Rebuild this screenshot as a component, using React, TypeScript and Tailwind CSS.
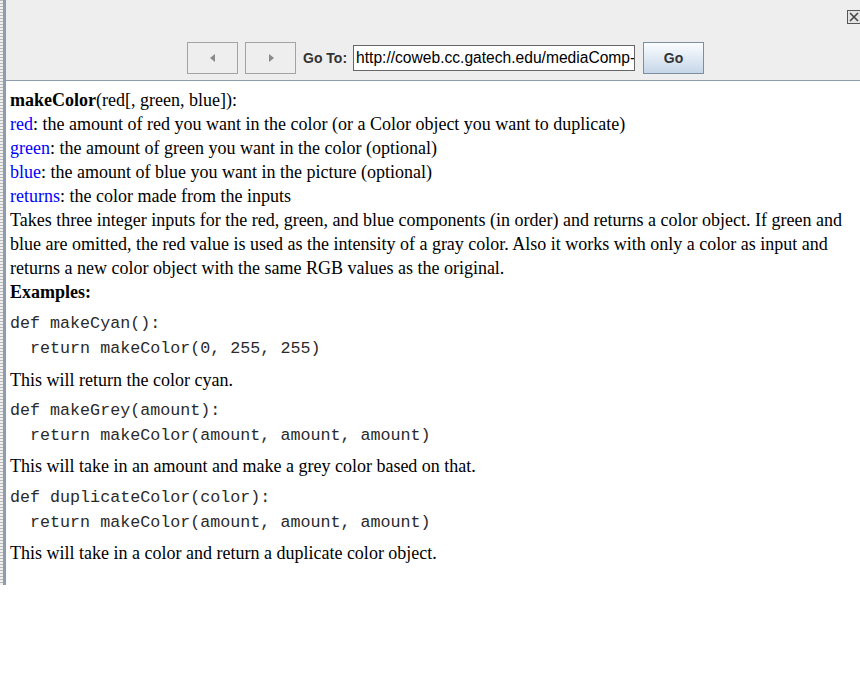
import React from "react";

function Triangle({ dir }: { dir: "left" | "right" }) {
  return (
    <svg width="8" height="8" viewBox="0 0 8 8">
      {dir === "left" ? (
        <polygon points="6,0 6,8 1,4" fill="#8a8a8a" />
      ) : (
        <polygon points="2,0 2,8 7,4" fill="#8a8a8a" />
      )}
    </svg>
  );
}

function Code({ lines, mt }: { lines: string[]; mt: string }) {
  return (
    <div className={`${mt} font-['Liberation_Mono',monospace] text-[16.7px] text-[#2a2a2a]`}>
      {lines.map((l, i) => (
        <div key={i} className="h-[25px] leading-[25px] whitespace-pre">
          {l}
        </div>
      ))}
    </div>
  );
}

function Line({ children, cls = "" }: { children: React.ReactNode; cls?: string }) {
  return <div className={`h-[24px] leading-[24px] whitespace-nowrap ${cls}`}>{children}</div>;
}

export default function App() {
  const blue = "text-[#0000ff]";
  return (
    <div className="w-[860px] h-[675px] bg-white overflow-hidden">
      <div className="flex h-[585px]">
        <div className="w-[3px] h-full bg-[repeating-linear-gradient(to_bottom,#b8b8b8_0px,#b8b8b8_1px,#f0f0f0_1px,#f0f0f0_3px)]" />
        <div className="w-[3px] h-full bg-[#8d9cae]" />
        <div className="flex-1 flex flex-col min-w-0">
          <div className="h-[81px] bg-[#eeeeee] border-b border-[#8d9cae] relative">
            <div className="absolute left-[841px] top-[10px] w-[14px] h-[14px] border border-[#555] bg-[#e4e4e4] flex items-center justify-center">
              <svg width="10" height="10" viewBox="0 0 10 10">
                <path d="M1 1 L9 9 M9 1 L1 9" stroke="#444" strokeWidth="1.6" />
              </svg>
            </div>
            <div className="flex items-center pl-[181px] pt-[42px] font-['Liberation_Sans',Arial,sans-serif]">
              <div className="w-[51px] h-[32px] border border-[#a3a3a3] bg-[#eeeeee] flex items-center justify-center">
                <Triangle dir="left" />
              </div>
              <div className="ml-[7px] w-[51px] h-[32px] border border-[#a3a3a3] bg-[#eeeeee] flex items-center justify-center">
                <Triangle dir="right" />
              </div>
              <span className="ml-[7px] text-[14px] font-bold text-[#333]">Go To:</span>
              <div className="ml-[6px] w-[282px] h-[26px] border border-[#666] bg-white overflow-hidden flex items-center pl-[2px]">
                <span className="text-[15.6px] text-black whitespace-nowrap">http://coweb.cc.gatech.edu/mediaComp-</span>
              </div>
              <div className="ml-[8px] w-[61px] h-[32px] border border-[#7d8ea0] bg-[linear-gradient(to_bottom,#fbfdff,#dbe6f2_60%,#c6d6e8)] flex items-center justify-center">
                <span className="text-[14px] font-bold text-[#333]">Go</span>
              </div>
            </div>
          </div>
          <div className="flex-1 bg-white pl-[4px] pt-[7px] font-['Liberation_Serif',serif] text-[18px] text-black">
            <Line>
              <b>makeColor</b>(red[, green, blue]):
            </Line>
            <Line>
              <span className={blue}>red</span>: the amount of red you want in the color (or a Color object you want to duplicate)
            </Line>
            <Line>
              <span className={blue}>green</span>: the amount of green you want in the color (optional)
            </Line>
            <Line>
              <span className={blue}>blue</span>: the amount of blue you want in the picture (optional)
            </Line>
            <Line>
              <span className={blue}>returns</span>: the color made from the inputs
            </Line>
            <Line>
              Takes three integer inputs for the red, green, and blue components (in order) and returns a color object. If green and
            </Line>
            <Line>
              blue are omitted, the red value is used as the intensity of a gray color. Also it works with only a color as input and
            </Line>
            <Line>returns a new color object with the same RGB values as the original.</Line>
            <Line>
              <b>Examples:</b>
            </Line>
            <Code mt="mt-[7px]" lines={["def makeCyan():", "  return makeColor(0, 255, 255)"]} />
            <Line cls="mt-[7px]">This will return the color cyan.</Line>
            <Code mt="mt-[6px]" lines={["def makeGrey(amount):", "  return makeColor(amount, amount, amount)"]} />
            <Line cls="mt-[6px]">This will take in an amount and make a grey color based on that.</Line>
            <Code mt="mt-[7px]" lines={["def duplicateColor(color):", "  return makeColor(amount, amount, amount)"]} />
            <Line cls="mt-[6px]">This will take in a color and return a duplicate color object.</Line>
          </div>
        </div>
      </div>
    </div>
  );
}
